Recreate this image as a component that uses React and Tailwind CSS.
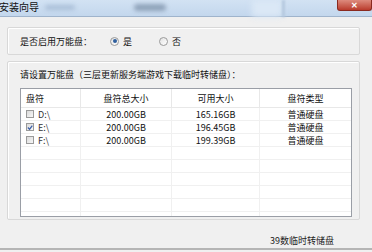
import React from 'react';

const font = { fontFamily: '"Noto Sans CJK SC", "Liberation Sans", sans-serif' };

const rows = [
  { name: 'D:\\', total: '200.00GB', free: '165.16GB', type: '普通硬盘', checked: false },
  { name: 'E:\\', total: '200.00GB', free: '196.45GB', type: '普通硬盘', checked: true },
  { name: 'F:\\', total: '200.00GB', free: '199.39GB', type: '普通硬盘', checked: false },
];

const Radio = ({ checked }) => (
  <span className="w-[9px] h-[9px] rounded-full border border-[#9a9a9a] bg-gradient-to-br from-[#e2e2e2] to-white flex items-center justify-center">
    {checked && <span className="w-[4px] h-[4px] rounded-full bg-[#2f5f9e]" />}
  </span>
);

const Check = ({ checked }) => (
  <span className="w-[8px] h-[8px] border border-[#9a9a9a] bg-gradient-to-br from-[#dadada] to-[#f7f7f7] flex items-center justify-center shrink-0">
    {checked && (
      <svg width="7" height="7" viewBox="0 0 7 7">
        <path d="M1 3.5 L3 5.5 L6.2 1.2" stroke="#3b5fa8" strokeWidth="1.4" fill="none" />
      </svg>
    )}
  </span>
);

const cols = 'grid grid-cols-[60px_91px_88px_1fr]';

const App = () => {
  return (
    <div className="w-[372px] h-[252px] bg-[#f0f0f0] overflow-hidden flex flex-col text-[9px] leading-none text-[#111]" style={font}>
      {/* title bar */}
      <div className="h-[17px] bg-gradient-to-b from-[#d2e2f3] to-[#c3d7ed] border-b border-[#9fb4cc] relative flex items-center shrink-0">
        <span className="text-[10px] leading-none -ml-[1px] -mt-[2px]">安装向导</span>
        <span className="absolute left-[45px] top-[5px] w-[30px] h-[5px] rounded-full bg-[#aabfd8] blur-[2px]" />
        <span className="absolute left-[134px] top-[4px] w-[32px] h-[7px] rounded-full bg-[#8fa3ba] blur-[2px]" />
        <span className="absolute left-[252px] top-0 w-[30px] h-[17px] bg-[#dbe8f6] blur-[3px]" />
        <span className="absolute left-[282px] top-0 w-[3px] h-[17px] bg-[#b4c8de] blur-[1px]" />
        <span className="absolute right-0 top-0 w-[35px] h-[11px] rounded-b-[3px] bg-gradient-to-b from-[#dd8a7d] to-[#b93a2c] border border-[#8a2a20] border-t-0 flex items-center justify-center text-white text-[8px] font-bold leading-none">
          ✕
        </span>
      </div>

      <div className="pl-[7px] pr-[12px] flex flex-col">
        {/* group 1 */}
        <div className="mt-[10px] h-[28px] border border-[#d8d8d8] rounded-[2px] flex items-center pl-[12px] shadow-[inset_1px_1px_0_#fff]">
          <span className="w-[86px]">是否启用万能盘：</span>
          <span className="flex items-center gap-[4px] ml-[4px]">
            <Radio checked />
            <span>是</span>
          </span>
          <span className="flex items-center gap-[4px] ml-[27px]">
            <Radio />
            <span>否</span>
          </span>
        </div>

        {/* group 2 */}
        <div className="mt-[6px] h-[159px] border border-[#d8d8d8] rounded-[2px] pl-[12px] pr-[7px] pt-[8px] flex flex-col shadow-[inset_1px_1px_0_#fff]">
          <span className="h-[10px] leading-[10px]">请设置万能盘（三层更新服务端游戏下载临时转储盘）：</span>
          <div className="mt-[8px] h-[129px] border border-[#9a9ea6] bg-white flex flex-col overflow-hidden">
            <div className={`h-[19px] ${cols} items-center border-b border-[#e8e8e8] shrink-0`}>
              <span className="pl-[5px] border-r border-[#e8e8e8] h-full flex items-center">盘符</span>
              <span className="border-r border-[#e8e8e8] h-full flex items-center justify-center">盘符总大小</span>
              <span className="border-r border-[#e8e8e8] h-full flex items-center justify-center">可用大小</span>
              <span className="h-full flex items-center justify-center">盘符类型</span>
            </div>
            {Array.from({ length: 9 }).map((_, i) => {
              const r = rows[i];
              return (
                <div key={i} className={`h-[13px] ${cols} border-b border-[#f0f0f0] shrink-0`}>
                  <span className="pl-[5px] border-r border-[#f0f0f0] flex items-center gap-[4px]">
                    {r && <Check checked={r.checked} />}
                    {r && <span className="text-[#333]">{r.name}</span>}
                  </span>
                  <span className="border-r border-[#f0f0f0] flex items-center justify-center">{r && r.total}</span>
                  <span className="border-r border-[#f0f0f0] flex items-center justify-center">{r && r.free}</span>
                  <span className="flex items-center justify-center">{r && r.type}</span>
                </div>
              );
            })}
          </div>
        </div>
      </div>

      {/* footer */}
      <div className="flex-1 flex items-end justify-end pr-[38px] pb-[2px] border-b-[2px] border-[#b5b5b5] mb-[2px]">
        <span className="leading-[10px] text-[#222]">39数临时转储盘</span>
      </div>
    </div>
  );
};

export default App;
